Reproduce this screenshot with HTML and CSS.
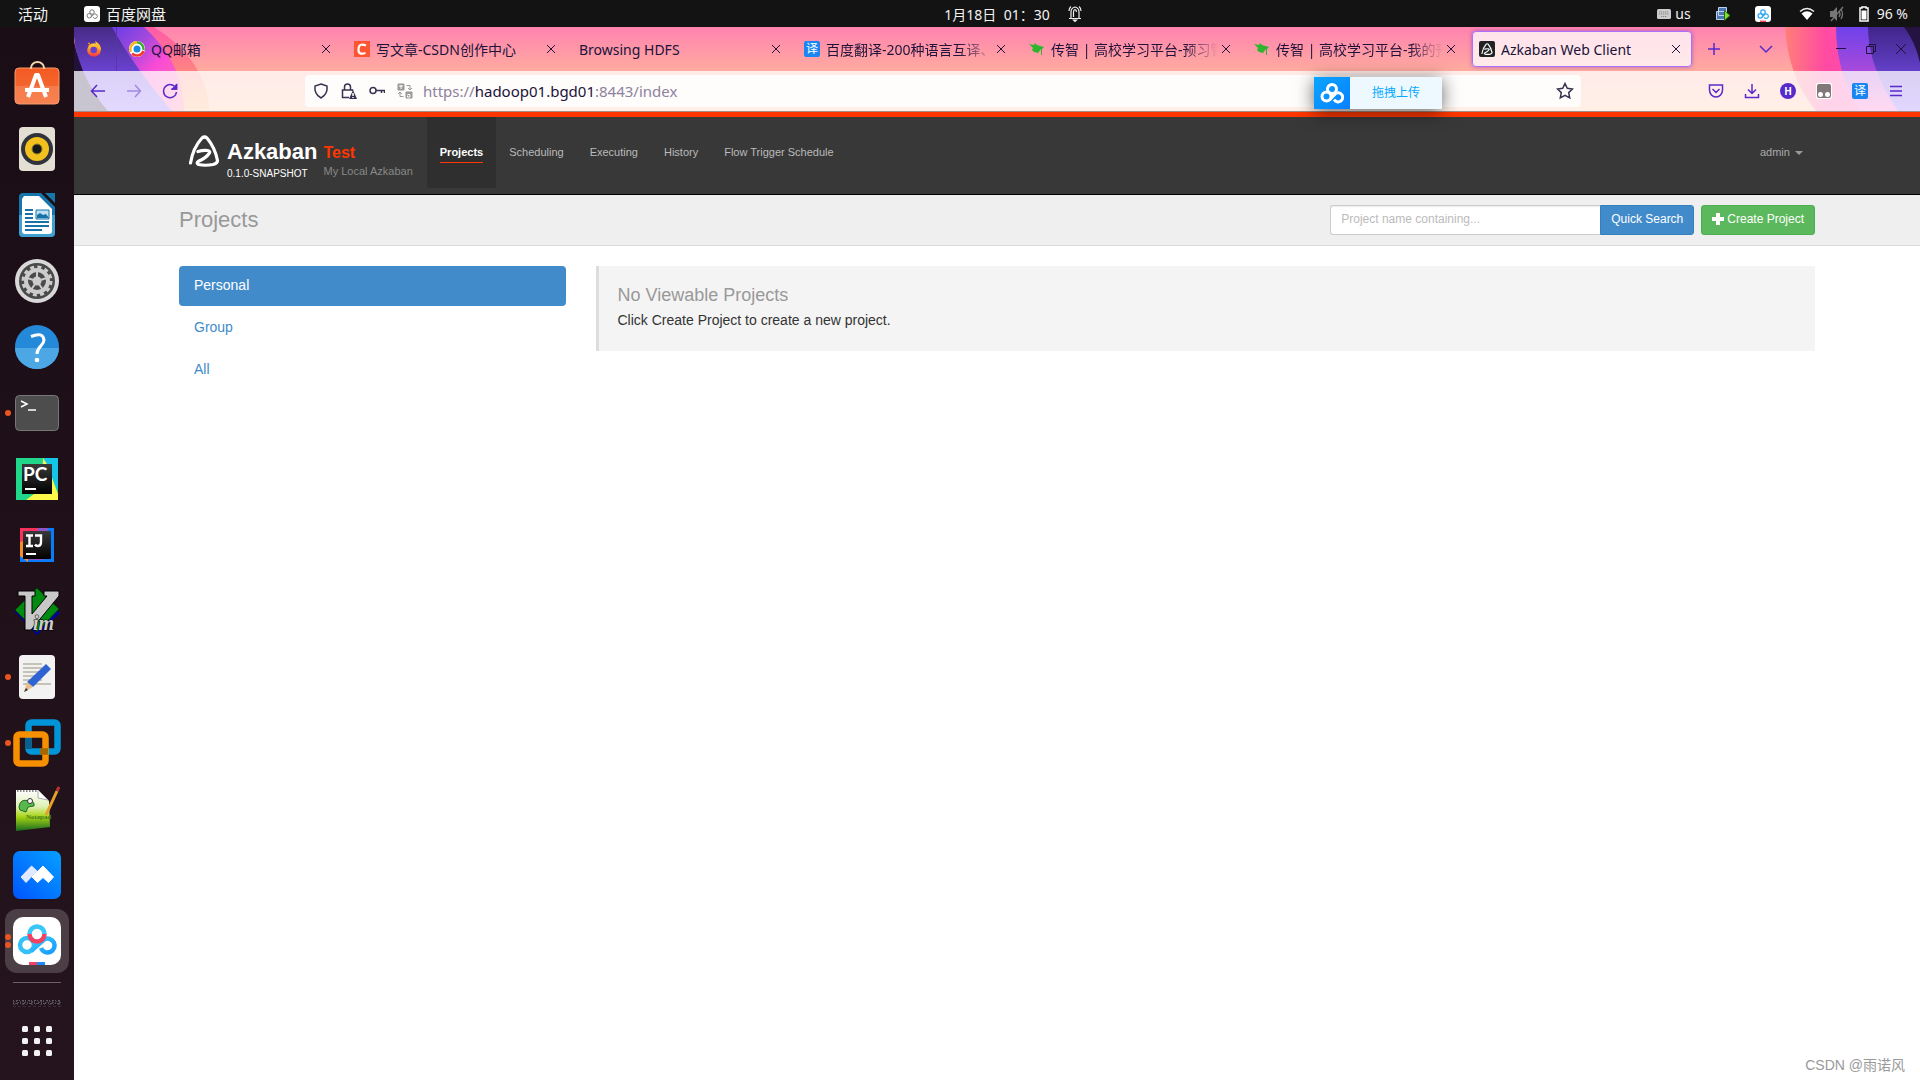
FILE: index.html
```html
<!DOCTYPE html>
<html lang="zh-CN">
<head>
    <meta charset="UTF-8">
    <meta name="viewport" content="width=device-width, initial-scale=1.0">
    <title>Azkaban Web Client</title>
    <link rel="stylesheet" href="styles.css">
</head>
<body>
    <svg class="defs" width="0" height="0" aria-hidden="true">
        <defs>
            <linearGradient id="g-blue" x1="0" y1="0" x2="1" y2="1"><stop offset="0" stop-color="#35c8fa"/><stop offset="1" stop-color="#1a9bff"/></linearGradient>
            <linearGradient id="g-violet" x1="0" y1="0" x2="0" y2="1"><stop offset="0" stop-color="#472b86"/><stop offset=".6" stop-color="#6f45dc"/><stop offset="1" stop-color="#8a60ff"/></linearGradient>
            <linearGradient id="g-mix" x1="0" y1="0" x2="1" y2="1"><stop offset="0" stop-color="#5f3be8"/><stop offset=".3" stop-color="#9b48dd"/><stop offset=".55" stop-color="#f94bd6"/><stop offset="1" stop-color="#ff7a9c"/></linearGradient>
            <linearGradient id="g-pink" x1="0" y1="0" x2="0" y2="1"><stop offset="0" stop-color="#ff5aa8"/><stop offset=".6" stop-color="#ff8a7c"/><stop offset="1" stop-color="#ffb070"/></linearGradient>
            <linearGradient id="g-hot" x1="0" y1="0" x2="1" y2="0"><stop offset="0" stop-color="#ff7f78"/><stop offset=".3" stop-color="#ff4aa2"/><stop offset="1" stop-color="#ff4bd0"/></linearGradient>
            <linearGradient id="g-indigo" x1="0" y1="0" x2="0" y2="1"><stop offset="0" stop-color="#6f42ea"/><stop offset=".6" stop-color="#b04bd8"/><stop offset="1" stop-color="#ff62c8"/></linearGradient>
            <linearGradient id="g-night" x1="0" y1="0" x2="0" y2="1"><stop offset="0" stop-color="#41258a"/><stop offset="1" stop-color="#8258ff"/></linearGradient>
            <linearGradient id="g-fox" x1="0" y1="0" x2="0" y2="1"><stop offset="0" stop-color="#ffd83a"/><stop offset=".5" stop-color="#ff8a1f"/><stop offset="1" stop-color="#f0304f"/></linearGradient>
            <linearGradient id="g-meet" x1="0" y1="1" x2="1" y2="0"><stop offset="0" stop-color="#0055ff"/><stop offset="1" stop-color="#06a0ff"/></linearGradient>
            <linearGradient id="g-store" x1="0" y1="0" x2="0" y2="1"><stop offset="0" stop-color="#f35a22"/><stop offset=".5" stop-color="#f4652f"/><stop offset=".51" stop-color="#f67b4b"/><stop offset="1" stop-color="#f78251"/></linearGradient>
            <linearGradient id="g-grass" x1="0" y1="0" x2="0" y2="1"><stop offset="0" stop-color="#fff"/><stop offset=".4" stop-color="#dff0b8"/><stop offset=".65" stop-color="#a8d613"/><stop offset="1" stop-color="#186a22"/></linearGradient>
            <linearGradient id="g-dark" x1="0" y1="0" x2="0" y2="1"><stop offset="0" stop-color="#3a3a3a"/><stop offset="1" stop-color="#000"/></linearGradient>
        </defs>
        <symbol id="i-close" viewBox="0 0 16 16"><path d="M4 4l8 8M12 4l-8 8"/></symbol>
        <symbol id="i-netdisk" viewBox="0 0 24 24">
            <circle cx="12" cy="8" r="4.500"/><circle cx="6.500" cy="15.500" r="4.500"/><path d="M9.700 18.700l5-5.200a4.500 4.500 0 1 1-.5 5"/>
        </symbol>
        <symbol id="i-cap" viewBox="0 0 16 16"><path fill="#2eb52e" d="M0 3l5 1 1-2 2 2 7 2-2 2v6h-1V8l-3 4-4-1-2-2 1-2z"/></symbol>
        <symbol id="i-azkaban" viewBox="0 0 32 32">
            <path fill="none" stroke="#fff" stroke-width="3.200" stroke-linecap="round" stroke-linejoin="round" d="M2.500 28C4 19 8.500 9 14 3Q16.500 1 19 3C24 9 28 18 29.500 25.500Q29.500 28.500 25 29.500Q17 31 10.500 29.500Q7.500 28 11 26Q18 23 21.500 18Q22.500 16 19.500 15.500Q15 15 10 16.500"/>
        </symbol>
    </svg>

    <header class="topbar">
        <div class="topbar-left">
            <button class="plain">活动</button>
            <button class="plain app-menu">
                <svg width="16" height="16" viewBox="0 0 16 16"><rect width="16" height="16" rx="3" fill="#fff"/><g fill="none" stroke="#777" stroke-width="2"><use href="#i-netdisk" x="2" y="2" width="12" height="12"/></g></svg>
                百度网盘
            </button>
        </div>
        <div class="clock">
            <span>1月18日&nbsp; 01：30</span>
            <svg width="14" height="18" viewBox="0 0 14 18" fill="none" stroke="#eee" stroke-width="1.200"><path d="M1 13.500h12M3 13V7q0-4 4-5 4 1 4 5v6M5.500 12V7q0-2 1.500-2.500Q8.500 5 8.500 7M1 6q0-3 2-4.500M13 6q0-3-2-4.500"/><path fill="#eee" d="M5.500 15h3l-1.500 1.500z"/></svg>
        </div>
        <div class="status">
            <span class="lang"><svg width="14" height="10" viewBox="0 0 14 10"><rect width="14" height="10" rx="1.500" fill="#ccc"/><path d="M2 3h10M2 5h10M4 7.500h6" stroke="#888" stroke-dasharray="1.300 .7"/></svg>us</span>
            <svg width="16" height="16" viewBox="0 0 16 16"><path fill="#4d78b5" stroke="#bdd2ee" d="M3.500 1.500h8v8h-8zM1.500 5.500h8v8h-8z"/><path fill="#7be02c" stroke="#2c6d14" d="M9.500 4.500l5.500 5-5.500 5z"/></svg>
            <svg class="net-status" width="16" height="16" viewBox="0 0 16 16"><rect width="16" height="16" rx="3" fill="#fff"/><g fill="none" stroke="#30a9ee" stroke-width="2.500"><use href="#i-netdisk" x="2" y="2" width="12" height="12"/></g><path stroke="#ed4868" stroke-width="1.500" d="M5 15.300h6"/></svg>
            <svg class="wifi" width="16" height="14" viewBox="0 0 16 14"><path d="M1 4.500Q8-1.500 15 4.500" fill="none" stroke="#eee" stroke-width="1.500"/><path fill="#fff" d="M2.500 6.500Q8 2 13.500 6.500L8 13z"/></svg>
            <svg width="16" height="16" viewBox="0 0 16 16"><path fill="#777" d="M1 5h3l4-4v14l-4-4H1z"/><path fill="none" stroke="#777" stroke-width="1.300" d="M10 5q2 3 0 6M12 3q3 5 0 10M2 15L14 1"/></svg>
            <span class="battery"><svg width="10" height="16" viewBox="0 0 10 16"><path fill="none" stroke="#fff" stroke-width="1.500" d="M3 2V1h4v1h2v13H1V2z"/><path fill="#fff" d="M2.500 4.500h5v9h-5z"/></svg>96 %</span>
        </div>
    </header>

    <div class="desktop">
        <nav class="dock" aria-label="Dock">
            <button class="dock-item" aria-label="Software">
                <svg width="46" height="46" viewBox="0 0 46 46"><rect x="1" y="8" width="44" height="36" rx="4" fill="url(#g-store)" stroke="#f59a6b"/><path d="M17 9V8a6.500 6 0 0 1 13 0v1" fill="none" stroke="#f3d3a8" stroke-width="2"/><path d="M14 37l8-22h2l8 22M11 30h24" fill="none" stroke="#fff" stroke-width="4" stroke-linejoin="round"/></svg>
            </button>
            <button class="dock-item" aria-label="Rhythmbox">
                <svg width="46" height="46" viewBox="0 0 46 46"><rect x="5" y="1" width="36" height="44" rx="4" fill="#e4dfd3"/><circle cx="23" cy="23" r="16" fill="#30323c"/><circle cx="23" cy="23" r="12" fill="#f2c11e"/><circle cx="23" cy="23" r="5" fill="#17181c" stroke="#8d7a28"/></svg>
            </button>
            <button class="dock-item" aria-label="LibreOffice Writer">
                <svg width="46" height="46" viewBox="0 0 46 46"><path fill="#1675ab" d="M9 1h18l14 14v26q0 4-4 4H9q-4 0-4-4V5q0-4 4-4z"/><path fill="#3f9fce" d="M5 23h36v18q0 4-4 4H9q-4 0-4-4z"/><path fill="#fff" d="M10 4h15l13 13v22q0 3-3 3H11q-3 0-3-3V7z"/><path fill="#1476aa" d="M31 1h10v10z"/><path stroke="#1872a8" stroke-width="2" d="M11 18h8M11 22h8M11 26h8M11 30h24M11 34h24M11 38h17"/><path fill="#bfe0f4" stroke="#1872a8" d="M22 18h13v9H22z"/><path fill="#1872a8" d="M23 26v-3l3-2 3 2 3-1 3 4z"/></svg>
            </button>
            <button class="dock-item" aria-label="Settings">
                <svg width="46" height="46" viewBox="0 0 46 46"><circle cx="23" cy="23" r="22" fill="#d9d9d9"/><circle cx="23" cy="23" r="18" fill="#4a4a4a"/><circle cx="23" cy="23" r="14" fill="none" stroke="#ccc" stroke-width="3" stroke-dasharray="4 3.330"/><circle cx="23" cy="23" r="11" fill="none" stroke="#ccc" stroke-width="4"/><circle cx="23" cy="23" r="4.500" fill="#ccc"/><path stroke="#ccc" stroke-width="2" d="M23 23V12M23 23l-10-3M23 23l10-3M23 23l-6 9M23 23l6 9"/></svg>
            </button>
            <button class="dock-item" aria-label="Help">
                <svg width="46" height="46" viewBox="0 0 46 46"><circle cx="23" cy="23" r="22" fill="#2489d8"/><path fill="#4da7e4" d="M1 24h44a22 21 0 0 1-44 0z"/><path fill="none" stroke="#fff" stroke-width="3" d="M17 12.500q12-5 13 3.500c0 6-7 6-7 14"/><circle cx="23" cy="36" r="2.300" fill="#fff"/></svg>
            </button>
            <button class="dock-item running" aria-label="Terminal">
                <svg width="46" height="46" viewBox="0 0 46 46"><rect x="1.500" y="5.500" width="43" height="35" rx="4" fill="#4d4d4d" stroke="#777"/><path fill="none" stroke="#fff" stroke-width="1.500" d="M7 11l6 3-6 3M14 20h8"/></svg>
            </button>
            <button class="dock-item" aria-label="PyCharm">
                <svg width="46" height="46" viewBox="0 0 46 46"><path fill="#21d789" d="M2 2h42v42H2z"/><path fill="#14c5e8" d="M30 2h14v32L28 8z"/><path fill="#fcf84a" d="M29 2l4 6 11 30v6H12l16-12z"/><path fill="url(#g-dark)" d="M8 8h30v30H8z"/><text class="badge-text" x="9" y="25" font-size="19">PC</text><path fill="#fff" d="M11 32h11v2H11z"/></svg>
            </button>
            <button class="dock-item" aria-label="IntelliJ IDEA">
                <svg width="46" height="46" viewBox="0 0 46 46"><path fill="#087cfa" d="M6 6h34v34H6z"/><path fill="#fe315d" d="M6 6h22L8 30H6z"/><path fill="#8c55c8" d="M24 6h10L30 38H14z"/><path fill="#f68b2c" d="M6 20v14l8 6V18z"/><path fill="url(#g-dark)" d="M9 9h28v28H9z"/><path fill="none" stroke="#fff" stroke-width="2.400" d="M12 13.500h7M12 24h7M15.500 13.500V24M21 13.500h6V20q0 4-3 4-2 0-3-1.500"/><path fill="#fff" d="M12 31h10v2H12z"/></svg>
            </button>
            <button class="dock-item" aria-label="Vim">
                <svg width="48" height="48" viewBox="0 0 48 48"><path fill="#0000a0" d="M24 4l23 22-23 22L1 24z"/><path fill="#008a10" stroke="#003800" d="M24 1l22 21-22 23L2 23z"/><path fill="#c8c8c8" stroke="#000" d="M5 4h17v5h-3v18L34 9h-3V4h15v5L18 43h-6V9H5z"/><text class="vim-text" x="20" y="43" font-size="20">im</text></svg>
            </button>
            <button class="dock-item running" aria-label="Text Editor">
                <svg width="46" height="46" viewBox="0 0 46 46"><rect x="5" y="1" width="36" height="44" rx="4" fill="#f2f2f2"/><path stroke="#b6b2a4" stroke-width="1.500" d="M9 10h19M9 14h19M9 18h19M9 22h19M9 26h19M9 30h28"/><path fill="#2f63d2" d="M32 10l5 5-18 18-6-5z"/><path fill="#e9bd89" d="M13 28l6 5-9 5z"/><path fill="#333" d="M10 38l2-4 2 2z"/></svg>
            </button>
            <button class="dock-item running" aria-label="VMware">
                <svg width="48" height="48" viewBox="0 0 48 48"><g fill="none" stroke-width="6.500"><rect x="15.500" y="3.500" width="29" height="29" rx="3" stroke="#0095d9"/><rect x="3.500" y="15.500" width="29" height="29" rx="3" stroke="#f69000"/><path stroke="#0b5f8d" d="M15.500 19v11"/><path stroke="#a66600" d="M27 32.500h8"/></g></svg>
            </button>
            <button class="dock-item" aria-label="Notepadqq">
                <svg width="46" height="46" viewBox="0 0 46 46"><path fill="url(#g-grass)" d="M2 4h22l11 11 1 26-34 4z"/><path stroke="#888" stroke-dasharray="1.500 1.500" stroke-width="2" d="M3 5h22"/><path fill="#fff" stroke="#aaa" d="M24 4v8l10 2z"/><path fill="#57b94b" stroke="#276b27" d="M5 21q1-9 10-6 6 0 5 5l-6 1-2 5-6-2z"/><circle cx="16" cy="15" r="2.500" fill="#fff" stroke="#333"/><text class="note-text" x="12" y="33" font-size="7">Notepad</text><path stroke="#e6a12b" stroke-width="3" d="M32 29L43 5"/><path stroke="#b33" stroke-width="3" d="M43 5l2-4"/></svg>
            </button>
            <button class="dock-item" aria-label="Meeting">
                <svg width="48" height="48" viewBox="0 0 48 48"><rect width="48" height="48" rx="7" fill="url(#g-meet)"/><path fill="#dfe9ff" stroke="#dfe9ff" stroke-linejoin="round" d="M8 26l10.500-11 5.500 5-11 11.500z"/><path fill="#fff" stroke="#fff" stroke-linejoin="round" d="M19 26l11-11 10.500 11-5 5.500-5.500-5-5.500 5z"/></svg>
            </button>
            <button class="dock-item active running two" aria-label="百度网盘">
                <svg width="48" height="48" viewBox="0 0 48 48"><rect width="48" height="48" rx="10" fill="#fff"/><g fill="none" stroke-width="4.500"><circle cx="14" cy="28" r="7" stroke="#35c1f7"/><path d="M18 34l13-11.500a7 7 0 1 1-3 8.500" stroke="url(#g-blue)"/><path d="M16.500 17a7.500 7.500 0 0 1 15 0" stroke="#3bc6f8"/><path d="M16.500 17a7.500 7.500 0 0 0 15 0" stroke="#f04264"/></g><path fill="#f04264" d="M16 45h8v3h-8z"/><path fill="#1b8cff" d="M24 45h8v3h-8z"/></svg>
            </button>
            <div class="dock-line"></div>
            <svg class="dock-mini" width="48" height="8" viewBox="0 0 48 8"><path stroke="#66585f" stroke-dasharray="1 2 2 1" d="M0 1.500h48"/><path stroke="#50474c" stroke-dasharray="2 1 1 3 1 1" d="M0 2.500h48"/><path stroke="#3f4a5c" stroke-dasharray="1 3 2 1" d="M0 3.500h48"/><path stroke="#5b5158" stroke-dasharray="1 1 3 2" d="M0 4.500h48"/><path stroke="#4c3c48" stroke-dasharray="2 2 1 4" d="M0 5.500h48"/><path stroke="#3c3038" stroke-dasharray="3 2" d="M0 7.500h48"/></svg>
            <button class="dock-item apps" aria-label="Applications">
                <svg width="32" height="32" viewBox="0 0 32 32" fill="#f2f2f2"><g id="dots"><rect x="1" y="1" width="6" height="6" rx="1.500"/><rect x="13" y="1" width="6" height="6" rx="1.500"/><rect x="25" y="1" width="6" height="6" rx="1.500"/></g><use href="#dots" y="12"/><use href="#dots" y="24"/></svg>
            </button>
        </nav>

        <div class="browser">
            <div class="chrome">
                <svg class="theme theme-left" width="160" height="84" viewBox="0 0 160 84">
                    <path fill="url(#g-pink)" d="M60 0h20q52 32 56 84H60z"/>
                    <path fill="url(#g-mix)" d="M30 0h40q40 36 40 84H60z"/>
                    <path fill="url(#g-violet)" d="M0 0h38q22 40 60 84H34Q4 50 0 10z"/>
                    <path fill="#21103a" d="M0 14q8 40 34 70H0z"/>
                </svg>
                <svg class="theme theme-right" width="160" height="84" viewBox="0 0 160 84">
                    <path fill="url(#g-hot)" d="M25 0h135v84H56Q28 50 25 0z"/>
                    <path fill="url(#g-indigo)" d="M76 0h84v84H100Q76 46 76 0z"/>
                    <path fill="url(#g-night)" d="M108 0h52v84h-22Q108 40 108 0z"/>
                    <path fill="#241340" d="M144 0h16v36q-4-20-16-36z"/>
                </svg>

                <div class="tabs">
                    <button class="tab-pinned" aria-label="Firefox">
                        <svg width="16" height="16" viewBox="0 0 16 16"><circle cx="8" cy="9" r="6.800" fill="url(#g-fox)"/><path fill="#ffbd2e" d="M9 0q6 3 6 9l-4-3z"/><path fill="#ff9a22" d="M2 3l1-2 2 3z"/><circle cx="7.700" cy="9" r="3.300" fill="#6b3fd6"/></svg>
                    </button>
                    <div class="tab">
                        <svg width="16" height="16" viewBox="0 0 16 16"><circle cx="8" cy="8" r="8" fill="#fff"/><path fill="none" stroke="#f5b81c" stroke-width="2.500" d="M2 11A7 7 0 0 1 8 1.300"/><path fill="none" stroke="#3daf2c" stroke-width="2.500" d="M8 1.300A7 7 0 0 1 14.500 9"/><path fill="none" stroke="#ee3b2c" stroke-width="2.500" d="M14.500 10A7 7 0 0 1 3 12.500"/><circle cx="8" cy="8" r="3.500" fill="#178be0"/></svg>
                        <span class="tab-title">QQ邮箱</span>
                        <button class="close" aria-label="Close"><svg width="16" height="16"><use href="#i-close"/></svg></button>
                    </div>
                    <div class="tab">
                        <svg width="16" height="16" viewBox="0 0 16 16"><path fill="#fc5531" d="M0 0h16v16H0z"/><path fill="none" stroke="#fff" stroke-width="2.200" d="M12 4.500Q5 1.500 4.500 8t7 4"/></svg>
                        <span class="tab-title">写文章-CSDN创作中心</span>
                        <button class="close" aria-label="Close"><svg width="16" height="16"><use href="#i-close"/></svg></button>
                    </div>
                    <div class="tab">
                        <span class="tab-title">Browsing HDFS</span>
                        <button class="close" aria-label="Close"><svg width="16" height="16"><use href="#i-close"/></svg></button>
                    </div>
                    <div class="tab">
                        <span class="yi">译</span>
                        <span class="tab-title fade">百度翻译-200种语言互译、</span>
                        <button class="close" aria-label="Close"><svg width="16" height="16"><use href="#i-close"/></svg></button>
                    </div>
                    <div class="tab">
                        <svg width="16" height="16"><use href="#i-cap"/></svg>
                        <span class="tab-title fade">传智 | 高校学习平台-预习管</span>
                        <button class="close" aria-label="Close"><svg width="16" height="16"><use href="#i-close"/></svg></button>
                    </div>
                    <div class="tab">
                        <svg width="16" height="16"><use href="#i-cap"/></svg>
                        <span class="tab-title fade">传智 | 高校学习平台-我的预</span>
                        <button class="close" aria-label="Close"><svg width="16" height="16"><use href="#i-close"/></svg></button>
                    </div>
                    <div class="tab selected">
                        <svg width="16" height="16" viewBox="0 0 16 16"><rect width="16" height="16" rx="2" fill="#222"/><use href="#i-azkaban" x="2" y="2" width="12" height="12"/></svg>
                        <span class="tab-title">Azkaban Web Client</span>
                        <button class="close" aria-label="Close"><svg width="16" height="16"><use href="#i-close"/></svg></button>
                    </div>
                    <button class="tab-action" aria-label="New tab"><svg width="14" height="14" viewBox="0 0 14 14"><path d="M7 1v12M1 7h12"/></svg></button>
                    <button class="tab-action list" aria-label="List tabs"><svg width="14" height="14" viewBox="0 0 14 14"><path d="M1 4l6 6 6-6"/></svg></button>
                    <div class="window-buttons">
                        <button aria-label="Minimize"><svg width="12" height="12" viewBox="0 0 12 12"><path d="M1 5.500h10"/></svg></button>
                        <button aria-label="Restore"><svg width="12" height="12" viewBox="0 0 12 12"><path d="M1.500 3.500h7v7h-7zM4 3.500v-2h6.500v7h-2"/></svg></button>
                        <button aria-label="Close window"><svg width="12" height="12" viewBox="0 0 12 12"><path d="M1 1l10 10M11 1L1 11"/></svg></button>
                    </div>
                </div>

                <div class="toolbar">
                    <div class="nav-buttons">
                        <button aria-label="Back"><svg width="16" height="16" viewBox="0 0 16 16"><path d="M7 2L1.500 8 7 14M1.500 8H15"/></svg></button>
                        <button class="off" aria-label="Forward"><svg width="16" height="16" viewBox="0 0 16 16"><path d="M9 2l5.500 6L9 14M14.500 8H1"/></svg></button>
                        <button aria-label="Reload"><svg width="16" height="16" viewBox="0 0 16 16"><path d="M14 5.500A6.500 6.500 0 1 0 14.500 9M14.500 1v5h-5"/><path fill="#592acb" d="M14.500 2v4h-4z"/></svg></button>
                    </div>
                    <div class="urlbar">
                        <svg width="16" height="16" viewBox="0 0 16 16"><path d="M8 1l6 2q1 8-6 12Q1 11 2 3z"/></svg>
                        <svg width="16" height="16" viewBox="0 0 16 16"><path d="M8 14.500H1.500V7h10v1M3.500 7V4a3 3 0 0 1 6 0v3"/><path fill="#3a3150" stroke="none" d="M12 7l4 9H8z"/><path stroke="#fff" d="M12 10v3M12 14v1"/></svg>
                        <svg width="16" height="16" viewBox="0 0 16 16"><circle cx="4" cy="7.500" r="3"/><path d="M7 7.500h8.500V10M12.500 7.500V10"/></svg>
                        <svg class="translate" width="16" height="16" viewBox="0 0 16 16"><path fill="#999" d="M1 1h6v6H1zM9 9h6v6H9z"/><path class="cut" d="M2 3h4M4 2v4M10.500 11.500h2.500V14h-2.500v-1.500"/><path d="M9.500 2.500h3.500v4M11 5l2 2 2-2M6.500 13.500H3v-4M5 11L3 9l-2 2"/></svg>
                        <span class="url">https://<b>hadoop01.bgd01</b>:8443/index</span>
                        <button class="star" aria-label="Bookmark"><svg width="18" height="18" viewBox="0 0 18 18"><path d="M9 1.500l2.300 4.800 5.200.7-3.800 3.600 1 5.200L9 13.300l-4.700 2.500 1-5.200L1.500 7l5.200-.7z"/></svg></button>
                    </div>
                    <div class="extensions">
                        <button aria-label="Pocket"><svg width="16" height="16" viewBox="0 0 16 16"><path d="M1.500 2h13v5a6.500 7 0 0 1-13 0zM4.500 6L8 9.500 11.500 6"/></svg></button>
                        <button aria-label="Downloads"><svg width="16" height="16" viewBox="0 0 16 16"><path d="M8 1v9M4 6.500L8 10.500l4-4M1.500 11v3.500h13V11"/></svg></button>
                        <button class="account" aria-label="Account">H</button>
                        <button aria-label="Tampermonkey"><svg class="solid" width="16" height="16" viewBox="0 0 16 16"><rect width="16" height="16" rx="2" fill="#fff"/><rect x="1" y="1" width="14" height="14" rx="2" fill="#817979"/><circle cx="4.500" cy="11.500" r="2.500" fill="#fff"/><circle cx="11.500" cy="11.500" r="2.500" fill="#fff"/></svg></button>
                        <button class="yi">译</button>
                        <button aria-label="Menu"><svg width="16" height="16" viewBox="0 0 16 16"><path d="M2 3.500h12M2 8h12M2 12.500h12"/></svg></button>
                    </div>
                </div>
                <button class="drop-upload">
                    <span class="drop-logo"><svg width="24" height="24"><use href="#i-netdisk"/></svg></span>
                    <span class="drop-label">拖拽上传</span>
                </button>
            </div>

            <div class="page">
                <div class="navbar">
                    <div class="container">
                        <a class="brand" href="#">
                            <svg width="32" height="32"><use href="#i-azkaban"/></svg>
                            <span class="brand-name">Azkaban<small>0.1.0-SNAPSHOT</small></span>
                            <span class="brand-env">Test<small>My Local Azkaban</small></span>
                        </a>
                        <nav class="menu">
                            <a class="active" href="#"><span>Projects</span></a>
                            <a href="#"><span>Scheduling</span></a>
                            <a href="#"><span>Executing</span></a>
                            <a href="#"><span>History</span></a>
                            <a href="#"><span>Flow Trigger Schedule</span></a>
                        </nav>
                        <a class="user" href="#">admin <i class="caret"></i></a>
                    </div>
                </div>

                <div class="page-header">
                    <div class="container">
                        <h1>Projects</h1>
                        <form class="search">
                            <input type="text" placeholder="Project name containing..." aria-label="Project name">
                            <button type="button" class="btn btn-primary">Quick Search</button>
                        </form>
                        <button class="btn btn-success"><svg width="12" height="12" viewBox="0 0 12 12"><path fill="#fff" d="M4 0h4v4h4v4H8v4H4V8H0V4h4z"/></svg>Create Project</button>
                    </div>
                </div>

                <main class="container content">
                    <ul class="pills">
                        <li><a class="active" href="#">Personal</a></li>
                        <li><a href="#">Group</a></li>
                        <li><a href="#">All</a></li>
                    </ul>
                    <div class="callout">
                        <h4>No Viewable Projects</h4>
                        <p>Click Create Project to create a new project.</p>
                    </div>
                </main>
                <footer class="watermark">CSDN @雨诺风</footer>
            </div>
        </div>
    </div>
</body>
</html>
```
FILE: styles.css
```css
* {
    box-sizing: border-box;
}

body {
    margin: 0;
    min-height: 100vh;
    display: flex;
    flex-direction: column;
    font-family: "Noto Sans", "Noto Sans CJK SC", sans-serif;
    font-size: 14px;
    background: #1b0f17;
}

button {
    font: inherit;
    color: inherit;
    background: none;
    border: none;
    padding: 0;
    cursor: pointer;
}

svg {
    display: block;
    flex: none;
}

a {
    text-decoration: none;
}

.defs {
    position: absolute;
}

/* top bar */
.topbar {
    height: 27px;
    display: grid;
    grid-template-columns: 1fr auto 1fr;
    align-items: center;
    padding: 0 12px 0 18px;
    background: #131313;
    color: #f2f2f2;
}

.topbar-left, .app-menu, .clock, .status, .lang, .battery {
    display: flex;
    align-items: center;
}

.topbar-left {
    gap: 36px;
    font-size: 15px;
}

.app-menu {
    gap: 6px;
}

.clock {
    gap: 18px;
    padding-left: 100px;
    font-family: "Noto Sans", "Noto Sans CJK TC", sans-serif;
}

.status {
    justify-content: flex-end;
    gap: 14px;
}

.lang {
    gap: 4px;
    padding-right: 10px;
}

.net-status {
    margin: 0 14px 0 10px;
}

.battery {
    gap: 8px;
}

/* dock */
.desktop {
    flex: 1;
    display: flex;
}

.dock {
    width: 74px;
    display: flex;
    flex-direction: column;
    align-items: center;
    padding-top: 24px;
    background: linear-gradient(#1a0d15, #25141d);
}

.dock-item {
    position: relative;
    width: 64px;
    height: 64px;
    margin-bottom: 2px;
    display: flex;
    align-items: center;
    justify-content: center;
    border-radius: 12px;
}

.dock-item.active {
    background: #4b3e45;
}

.dock-item.apps {
    height: 60px;
    margin-bottom: 0;
}

.running::before {
    content: "";
    position: absolute;
    left: 0;
    width: 6px;
    height: 6px;
    border-radius: 50%;
    background: #e95420;
}

.two::before {
    margin-bottom: 8px;
    box-shadow: 0 8px 0 #e95420;
}

.dock-line {
    width: 48px;
    height: 1px;
    margin-top: 7px;
    background: #6c6167;
}

.dock-mini {
    margin: 16px 0 4px;
}

.badge-text {
    fill: #fff;
    font-family: "Lato", sans-serif;
    font-weight: bold;
}

.vim-text {
    fill: #ccc;
    stroke: #000;
    stroke-width: 1px;
    paint-order: stroke;
    font-family: "Liberation Serif", serif;
    font-style: italic;
    font-weight: bold;
}

.note-text {
    fill: #4a7a22;
    font-family: "Liberation Serif", serif;
    font-weight: bold;
}

/* browser */
.browser {
    flex: 1;
    min-width: 0;
    display: flex;
    flex-direction: column;
}

.chrome {
    position: relative;
    background: linear-gradient(#ff83b0, #ffab9f 44px, #ffbf98);
    color: #20123a;
    border-bottom: 1px solid #a08c8c;
}

.theme {
    position: absolute;
    top: 0;
}

.theme-left {
    left: 0;
}

.theme-right {
    right: 0;
}

.tabs {
    position: relative;
    height: 44px;
    display: flex;
    align-items: center;
}

.tab-pinned {
    width: 43px;
    height: 44px;
    padding-left: 12px;
    border-right: 1px solid #5a34a8;
}

.tab {
    flex: 0 1 225px;
    min-width: 0;
    height: 36px;
    display: flex;
    align-items: center;
    gap: 6px;
    padding: 0 8px 0 12px;
}

.tab-title {
    flex: 1;
    white-space: nowrap;
}

.fade {
    margin-right: -6px;
    overflow: hidden;
    mask-image: linear-gradient(to left, transparent, #000 34px);
}

.tab.selected {
    flex-basis: 220px;
    margin-left: 5px;
    padding: 0 7px 0 6px;
    border: 1px solid #ac70ff;
    border-radius: 4px;
    background: rgba(255, 255, 255, 0.76);
    box-shadow: 0 0 4px rgba(89, 42, 203, 0.5);
}

.close svg {
    fill: none;
    stroke: #20123a;
    stroke-width: 1;
}

.tab-action svg, .window-buttons svg {
    fill: none;
    stroke: #592acb;
    stroke-width: 1;
}

.tab-action {
    margin-left: 15px;
}

.tab-action.list {
    margin-left: 38px;
}

.tab-action svg {
    stroke-width: 1.5;
}

.window-buttons {
    display: flex;
    gap: 18px;
    margin-left: auto;
    padding-right: 13px;
}

.window-buttons svg {
    stroke: #20123a;
}

.yi {
    width: 16px;
    height: 16px;
    border-radius: 2px;
    background: #1a86f2;
    color: #fff;
    font-size: 12px;
    line-height: 16px;
    text-align: center;
}

.toolbar {
    position: relative;
    height: 40px;
    display: flex;
    align-items: center;
    background: rgba(255, 255, 255, 0.76);
}

.toolbar svg {
    fill: none;
    stroke: #592acb;
    stroke-width: 1.5;
}

.toolbar .solid {
    stroke: none;
}

.nav-buttons {
    display: flex;
    gap: 20px;
    padding-left: 16px;
}

.off {
    opacity: 0.45;
}

.urlbar {
    flex: 1;
    height: 32px;
    display: flex;
    align-items: center;
    gap: 12px;
    margin: 0 127px;
    padding: 0 7px 0 8px;
    border-radius: 4px;
    background: rgba(255, 255, 255, 0.85);
}

.urlbar svg {
    stroke: #3a3150;
}

.urlbar .translate {
    stroke: #999;
    stroke-width: 1;
}

.cut {
    stroke: #fff;
}

.url {
    margin-left: -2px;
    color: #8d829c;
    font-size: 15px;
}

.url b {
    font-weight: normal;
    color: #20123a;
}

.star {
    margin-left: auto;
}

.extensions {
    display: flex;
    gap: 20px;
    padding-right: 16px;
}

.account {
    width: 16px;
    height: 16px;
    border-radius: 50%;
    background: #592acb;
    color: #fff;
    font-size: 10px;
    font-weight: bold;
    line-height: 16px;
}

.drop-upload {
    position: absolute;
    top: 50px;
    right: 478px;
    width: 128px;
    height: 32px;
    display: flex;
    background: #eef9ff;
    color: #06a7ff;
    font-size: 12px;
    box-shadow: 0 3px 18px rgba(0, 0, 0, 0.6);
}

.drop-logo {
    width: 36px;
    height: 32px;
    padding: 4px 6px;
    background: linear-gradient(135deg, #0aa5ff, #0880ff);
}

.drop-logo svg {
    fill: none;
    stroke: #fff;
    stroke-width: 3;
}

.drop-label {
    flex: 1;
    line-height: 32px;
}

/* azkaban */
.page {
    flex: 1;
    display: flex;
    flex-direction: column;
    border-top: 5px solid #ff3601;
    background: #fff;
    color: #333;
    font-family: "Liberation Sans", "Noto Sans CJK SC", sans-serif;
}

.container {
    padding: 0 105px;
    display: flex;
}

.navbar {
    background: #383838;
    border-bottom: 1px solid #000;
}

.navbar .container {
    height: 77px;
}

.brand {
    display: flex;
    gap: 7px;
    padding: 18px 14px 0 9px;
    color: #fff;
    font-weight: bold;
}

.brand-name, .brand-env {
    display: flex;
    flex-direction: column;
    line-height: 34px;
}

.brand-name {
    font-size: 22px;
}

.brand-env {
    margin-left: -1px;
    color: #ff3601;
    font-size: 16px;
    line-height: 36px;
}

.brand small {
    font-size: 10px;
    font-weight: normal;
    line-height: 10px;
}

.brand-env small {
    color: #888;
    font-size: 11px;
    line-height: 0;
}

.menu {
    display: flex;
    height: 71px;
}

.menu a {
    padding: 28px 13px 0;
    color: #bbb;
    font-size: 11px;
}

.menu span {
    display: block;
    line-height: 15px;
}

.menu .active {
    background: #2f2f2f;
    color: #fff;
    font-weight: bold;
}

.menu .active span {
    padding-bottom: 2px;
    border-bottom: 1px solid #ff3601;
}

.user {
    margin-left: auto;
    padding: 28px 12px 0;
    color: #aaa;
    font-size: 11px;
    line-height: 15px;
}

.caret {
    display: inline-block;
    margin-left: 2px;
    border: 4px solid transparent;
    border-top-color: #999;
    border-bottom: 0;
    vertical-align: middle;
}

.page-header {
    background: #efefef;
    border-bottom: 1px solid #dbdbdb;
}

.page-header .container {
    height: 50px;
    align-items: center;
}

h1 {
    margin: 0 auto 0 0;
    color: #999;
    font-size: 22px;
    font-weight: normal;
}

.search {
    display: flex;
    margin-right: 7px;
}

.search input {
    width: 270px;
    height: 30px;
    padding: 0 10px 2px;
    border: 1px solid #ccc;
    border-right: 0;
    border-radius: 3px 0 0 3px;
    font: 12px "Liberation Sans", sans-serif;
    box-shadow: inset 0 1px 1px rgba(0, 0, 0, 0.075);
}

.search input::placeholder {
    color: #bbb;
}

.btn {
    height: 30px;
    display: flex;
    align-items: center;
    gap: 3px;
    padding: 0 10px 2px;
    border-radius: 3px;
    color: #fff;
    font-size: 12px;
}

.btn-primary {
    background: #428bca;
    border: 1px solid #357ebd;
    border-radius: 0 3px 3px 0;
}

.btn-success {
    background: #5cb85c;
    border: 1px solid #4cae4c;
}

.content {
    display: grid;
    grid-template-columns: repeat(12, 1fr);
    gap: 30px;
    margin-top: 20px;
    align-items: start;
}

.pills {
    grid-column: span 3;
    margin: 0;
    padding: 0;
    list-style: none;
}

.pills a {
    display: block;
    margin-bottom: 2px;
    padding: 9px 15px 11px;
    border-radius: 4px;
    color: #428bca;
    line-height: 20px;
}

.pills .active {
    background: #428bca;
    color: #fff;
}

.callout {
    grid-column: span 9;
    padding: 20px 20px 20px 19px;
    border-left: 3px solid #ddd;
    background: #f4f4f4;
}

.callout h4 {
    margin: 0 0 6px;
    color: #999;
    font-size: 18px;
    font-weight: normal;
    line-height: 18px;
}

.callout p {
    margin: 0 0 1px;
    line-height: 20px;
}

.watermark {
    margin: auto 15px 6px auto;
    color: #999;
    font-size: 14px;
}
```
